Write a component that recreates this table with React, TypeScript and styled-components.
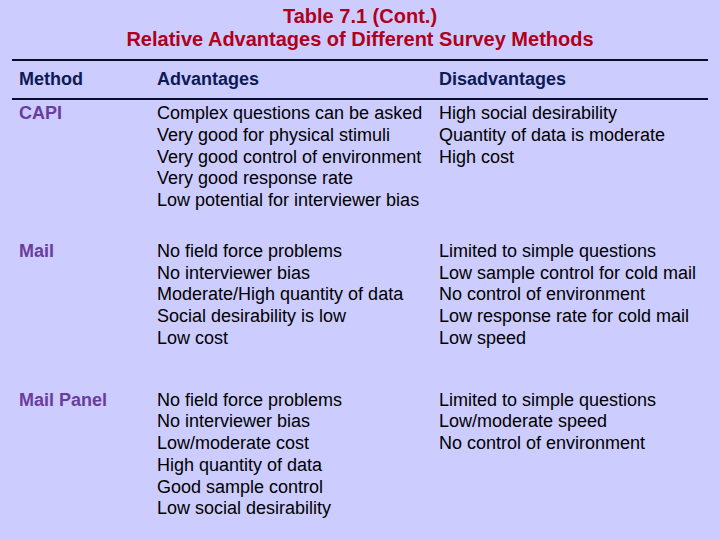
import styled, { createGlobalStyle } from 'styled-components';

const GlobalStyle = createGlobalStyle`
  html, body {
    margin: 0;
    padding: 0;
    background: #ccccfe;
  }
  body {
    font-family: "Liberation Sans", Arial, sans-serif;
  }
`;

type Row = {
  method: string;
  advantages: string[];
  disadvantages: string[];
  space: number;
};

const rows: Row[] = [
  {
    method: 'CAPI',
    advantages: [
      'Complex questions can be asked',
      'Very good for physical stimuli',
      'Very good control of environment',
      'Very good response rate',
      'Low potential for interviewer bias',
    ],
    disadvantages: ['High social desirability', 'Quantity of data is moderate', 'High cost'],
    space: 29,
  },
  {
    method: 'Mail',
    advantages: [
      'No field force problems',
      'No interviewer bias',
      'Moderate/High quantity of data',
      'Social desirability is low',
      'Low cost',
    ],
    disadvantages: [
      'Limited to simple questions',
      'Low sample control for cold mail',
      'No control of environment',
      'Low response rate for cold mail',
      'Low speed',
    ],
    space: 40,
  },
  {
    method: 'Mail Panel',
    advantages: [
      'No field force problems',
      'No interviewer bias',
      'Low/moderate cost',
      'High quantity of data',
      'Good sample control',
      'Low social desirability',
    ],
    disadvantages: ['Limited to simple questions', 'Low/moderate speed', 'No control of environment'],
    space: 0,
  },
];

function App() {
  return (
    <Page>
      <GlobalStyle />
      <Title>
        <div>Table 7.1 (Cont.)</div>
        <div>Relative Advantages of Different Survey Methods</div>
      </Title>
      <Table>
        <Header>
          <HeadCell>Method</HeadCell>
          <HeadCell>Advantages</HeadCell>
          <HeadCell>Disadvantages</HeadCell>
        </Header>
        <Body>
          {rows.map((row) => (
            <BodyRow key={row.method} $space={row.space}>
              <Method>{row.method}</Method>
              <List>
                {row.advantages.map((item) => (
                  <span key={item}>{item}</span>
                ))}
              </List>
              <List>
                {row.disadvantages.map((item) => (
                  <span key={item}>{item}</span>
                ))}
              </List>
            </BodyRow>
          ))}
        </Body>
      </Table>
    </Page>
  );
}

export default App;

const Page = styled.div`
  width: 720px;
  height: 540px;
  overflow: hidden;
  box-sizing: border-box;
  padding: 5px 12px 0;
`;

const Title = styled.div`
  display: flex;
  flex-direction: column;
  align-items: center;

  font-size: 20px;
  font-weight: bold;
  line-height: 23px;
  color: #b0001c;
`;

const Table = styled.div`
  margin-top: 8px;
  border-top: 2px solid #0a0a2a;
`;

const Header = styled.div`
  display: grid;
  grid-template-columns: 138px 282px 1fr;

  padding: 7px 7px 8px;
  border-bottom: 2px solid #0a0a2a;

  font-size: 18px;
  line-height: 22px;
`;

const HeadCell = styled.div`
  font-weight: bold;
  color: #0c1a55;
`;

const Body = styled.div`
  display: flex;
  flex-direction: column;
  padding: 3px 7px 0;
`;

const BodyRow = styled.div<{ $space: number }>`
  display: grid;
  grid-template-columns: 138px 282px 1fr;
  padding-bottom: ${({ $space }) => $space}px;

  font-size: 18px;
  line-height: 21.75px;
`;

const Method = styled.div`
  font-weight: bold;
  color: #6a3d9c;
`;

const List = styled.div`
  display: flex;
  flex-direction: column;
  color: #000;
`;
